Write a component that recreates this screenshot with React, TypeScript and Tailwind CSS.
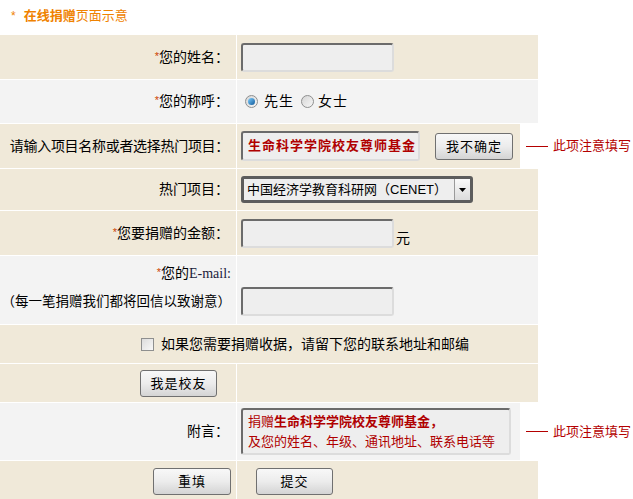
import React from "react";

const beige = "bg-[#f0e9d9]";
const gray = "bg-[#f3f3f3]";

function Btn({ label, w = "w-[78px]" }: { label: string; w?: string }) {
  return (
    <button
      className={`${w} h-[27px] shrink-0 rounded-[3px] border border-[#707070] bg-gradient-to-b from-[#f8f8f8] via-[#ececec] to-[#d4d4d4] text-[13px] leading-none text-black tracking-[1px]`}
    >
      {label}
    </button>
  );
}

function Field({ w = "w-[153px]", h = "h-[29px]", children }: { w?: string; h?: string; children?: React.ReactNode }) {
  return (
    <div
      className={`${w} ${h} shrink-0 rounded-[3px] border-2 border-t-[#6b6b6b] border-l-[#6b6b6b] border-b-[#dcdcdc] border-r-[#dcdcdc] bg-[#eeeeee]`}
    >
      {children}
    </div>
  );
}

function Note() {
  return (
    <div className="flex shrink-0 items-center pl-[6px] text-[13px] text-[#b40000] whitespace-nowrap">
      <div className="w-[22px] h-px bg-[#b40000]" />
      <span className="ml-[5px]">此项注意填写</span>
    </div>
  );
}

function Row({
  bg,
  h,
  left,
  right,
  note,
  leftClass = "justify-end items-center pr-[7px]",
  rightClass = "items-center pl-[4px]",
}: {
  bg: string;
  h: string;
  left?: React.ReactNode;
  right?: React.ReactNode;
  note?: boolean;
  leftClass?: string;
  rightClass?: string;
}) {
  return (
    <div className={`flex ${h}`}>
      <div className={`w-[236px] shrink-0 flex whitespace-nowrap ${bg} ${leftClass}`}>{left}</div>
      <div className="w-px shrink-0 bg-white" />
      <div className={`${note ? "w-[283px]" : "w-[301px]"} shrink-0 flex whitespace-nowrap ${bg} ${rightClass}`}>{right}</div>
      {note && <Note />}
    </div>
  );
}

function Star() {
  return <span className="text-[#cc4400] text-[11px] relative top-[-2px]">*</span>;
}

function Radio({ checked }: { checked?: boolean }) {
  return (
    <span className="w-[13px] h-[13px] rounded-full border border-[#8e8f8f] bg-gradient-to-br from-[#d6d6d6] to-[#f7f7f7] flex items-center justify-center">
      {checked && <span className="w-[7px] h-[7px] rounded-full bg-gradient-to-br from-[#7fd0ff] to-[#0a5a9a]" />}
    </span>
  );
}

export default function App() {
  return (
    <div className="w-[633px] h-[499px] overflow-hidden bg-white text-black font-['Liberation_Sans','Noto_Sans_CJK_SC',sans-serif]">
      <div className="h-[35px] flex items-start pt-[8px] pl-[11px] text-[13px] leading-[16px] text-[#ef8200]">
        <span className="mr-[8px] text-[12px]">*</span>
        <span className="font-bold">在线捐赠</span>
        <span>页面示意</span>
      </div>

      <div className="flex flex-col gap-px">
        <Row
          bg={beige}
          h="h-[44px]"
          left={<span className="text-[14px]"><Star />您的姓名：</span>}
          right={<Field />}
        />
        <Row
          bg={gray}
          h="h-[43px]"
          left={<span className="text-[14px]"><Star />您的称呼：</span>}
          rightClass="items-center pl-[8px]"
          right={
            <div className="flex items-center text-[14px]">
              <Radio checked />
              <span className="ml-[6px] tracking-[1px]">先生</span>
              <span className="ml-[7px]"><Radio /></span>
              <span className="ml-[4px] tracking-[1px]">女士</span>
            </div>
          }
        />
        <Row
          bg={beige}
          h="h-[44px]"
          note
          left={<span className="text-[14px] tracking-[-0.3px]">请输入项目名称或者选择热门项目：</span>}
          right={
            <div className="flex items-center">
              <Field w="w-[179px]" h="h-[30px]">
                <div className="pl-[5px] h-full flex items-center text-[13px] font-bold text-[#b00000] tracking-[1px]">
                  生命科学学院校友尊师基金
                </div>
              </Field>
              <span className="ml-[15px]"><Btn label="我不确定" /></span>
            </div>
          }
        />
        <Row
          bg={beige}
          h="h-[41px]"
          left={<span className="text-[14px]">热门项目：</span>}
          right={
            <div className="w-[232px] h-[27px] rounded-[3px] border-[3px] border-[#5c5c5c] bg-[#eeeeee] flex items-stretch">
              <div className="flex-1 flex items-center pl-[3px] text-[13px]">中国经济学教育科研网（CENET）</div>
              <div className="w-[16px] border-l border-[#9a9a9a] bg-gradient-to-b from-[#fafafa] to-[#dcdcdc] flex items-center justify-center">
                <svg width="7" height="4" viewBox="0 0 7 4"><path d="M0 0h7L3.5 4z" fill="#000" /></svg>
              </div>
            </div>
          }
        />
        <Row
          bg={beige}
          h="h-[44px]"
          left={<span className="text-[14px]"><Star />您要捐赠的金额：</span>}
          right={
            <div className="flex items-end">
              <Field />
              <span className="ml-[2px] text-[14px] leading-[20px]">元</span>
            </div>
          }
        />
        <Row
          bg={gray}
          h="h-[68px]"
          leftClass="flex-col items-end pr-[5px] pt-[7px]"
          rightClass="items-start pl-[4px] pt-[31px]"
          left={
            <>
              <span className="text-[14px] leading-[20px]">
                <Star />您的<span className="font-['Liberation_Serif',serif] text-[#1c1c3c]">E-mail:</span>
              </span>
              <span className="mt-[8px] text-[13.5px] leading-[20px]">（每一笔捐赠我们都将回信以致谢意）</span>
            </>
          }
          right={<Field />}
        />
        <div className={`h-[38px] w-[538px] ${beige} flex items-center pl-[141px]`}>
          <span className="w-[13px] h-[13px] border border-[#8e8f8f] bg-gradient-to-br from-[#dcdcdc] to-[#f8f8f8]" />
          <span className="ml-[7px] text-[14px]">如果您需要捐赠收据，请留下您的联系地址和邮编</span>
        </div>
        <Row
          bg={beige}
          h="h-[38px]"
          leftClass="justify-end items-center pr-[19px]"
          left={<Btn label="我是校友" w="w-[77px]" />}
        />
        <Row
          bg={gray}
          h="h-[57px]"
          note
          left={<span className="text-[14px]">附言：</span>}
          right={
            <Field w="w-[270px]" h="h-[47px]">
              <div className="pl-[5px] pt-[2px] text-[13px] leading-[20px] text-[#b00000]">
                <div>捐赠<span className="font-bold">生命科学学院校友尊师基金，</span></div>
                <div>及您的姓名、年级、通讯地址、联系电话等</div>
              </div>
            </Field>
          }
        />
        <Row
          bg={beige}
          h="h-[40px]"
          leftClass="justify-end items-center pr-[5px]"
          rightClass="items-center pl-[19px]"
          left={<Btn label="重填" />}
          right={<Btn label="提交" w="w-[77px]" />}
        />
      </div>
    </div>
  );
}
